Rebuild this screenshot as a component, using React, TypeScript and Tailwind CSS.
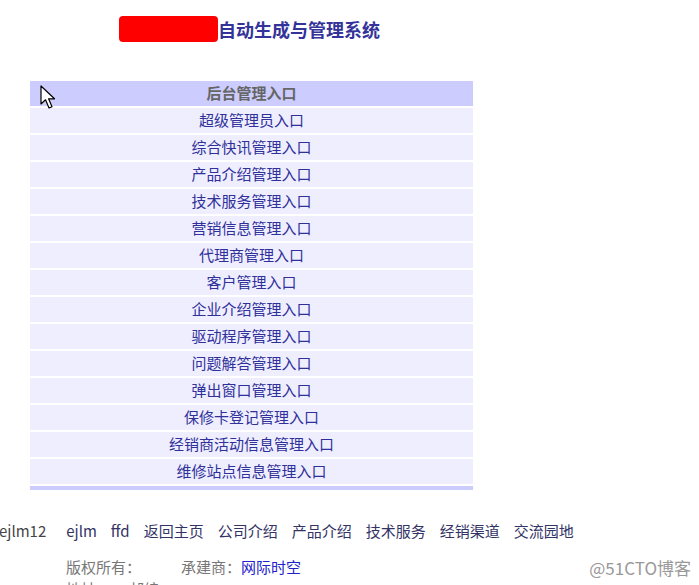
const rows = [
  '超级管理员入口',
  '综合快讯管理入口',
  '产品介绍管理入口',
  '技术服务管理入口',
  '营销信息管理入口',
  '代理商管理入口',
  '客户管理入口',
  '企业介绍管理入口',
  '驱动程序管理入口',
  '问题解答管理入口',
  '弹出窗口管理入口',
  '保修卡登记管理入口',
  '经销商活动信息管理入口',
  '维修站点信息管理入口',
];

const links = ['ejlm', 'ffd', '返回主页', '公司介绍', '产品介绍', '技术服务', '经销渠道', '交流园地'];

const font = { fontFamily: '"Noto Sans CJK SC", "Liberation Sans", sans-serif' };

function Cursor() {
  return (
    <svg className="absolute left-[40px] top-[85px]" width="18" height="26" viewBox="0 0 18 26">
      <path d="M1 1 L1 19 L5.5 14.8 L9 23 L12 21.8 L8.6 13.8 L14.5 13.8 Z" fill="#fff" stroke="#000" strokeWidth="1.2" strokeLinejoin="round" />
    </svg>
  );
}

export default function App() {
  return (
    <div className="relative w-[699px] h-[585px] overflow-hidden bg-white" style={font}>
      {/* Title */}
      <div className="w-[473px] pl-[30px] pt-[14px] h-[81px]">
        <div className="flex justify-center items-center h-[30px] text-[18px] font-bold text-[#333399] leading-none">
          <span className="inline-block w-[99px] h-[26px] bg-[#ff0000] rounded-[4px] -ml-[4px]" />
          <span>自动生成与管理系统</span>
        </div>
      </div>

      {/* Table */}
      <div className="ml-[30px] w-[443px] flex flex-col gap-[2px]">
        <div className="h-[25px] bg-[#ccccff] flex items-center justify-center text-[15px] font-bold text-[#666666]">
          后台管理入口
        </div>
        {rows.map((r) => (
          <div key={r} className="h-[25px] bg-[#eeeeff] flex items-center justify-center text-[15px] text-[#30309a]">
            {r}
          </div>
        ))}
        <div className="h-[4px] bg-[#ccccff]" />
      </div>

      {/* Footer */}
      <div className="mt-[30px] flex items-center h-[22px] text-[15px] text-[#333366] whitespace-nowrap">
        <span className="-ml-[1px] text-[#444444]">ejlm12</span>
        <div className="ml-[20px] flex gap-[14px]">
          {links.map((l) => (
            <span key={l}>{l}</span>
          ))}
        </div>
      </div>
      <div className="mt-[14px] pl-[66px] flex items-center h-[22px] text-[15px] text-[#777777] whitespace-nowrap">
        <span>版权所有：</span>
        <span className="ml-[40px]">承建商：</span>
        <span className="text-[#2222cc]">网际时空</span>
      </div>
      <div className="pl-[66px] flex items-center h-[22px] text-[15px] text-[#777777] whitespace-nowrap">
        <span>地址：</span>
        <span className="ml-[18px]">邮编：</span>
      </div>

      <div className="absolute right-[8px] top-[555px] text-[17px] text-[#999999]">@51CTO博客</div>
      <Cursor />
    </div>
  );
}
